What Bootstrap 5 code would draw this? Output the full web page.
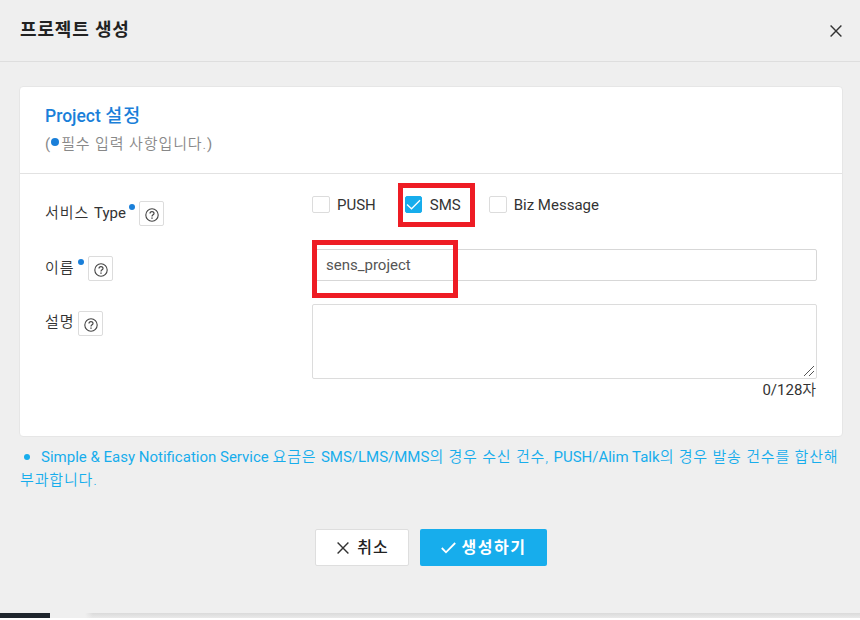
<!DOCTYPE html>
<html lang="ko">
<head>
<meta charset="utf-8">
<title>프로젝트 생성</title>
<link href="https://cdn.jsdelivr.net/npm/bootstrap@5.3.0/dist/css/bootstrap.min.css" rel="stylesheet">
<style>
body{font-family:Roboto,"Noto Sans CJK KR",sans-serif;font-size:15px;line-height:22px;color:#333;background:#fff;height:620px;overflow:hidden}
.dialog-page{height:618px;background:#efefef}
.dialog-head{height:62px;border-bottom:1px solid #dedede;padding:17px 18px 0 20px}
.dialog-title{font-size:18px;line-height:26px;font-weight:700;color:#222;margin:0;letter-spacing:.85px}
.close-x{margin-top:8px;width:12px;height:12px}
.ko{letter-spacing:.83px;font-weight:350}
.panel{margin:24px 17px 0 19px;height:351px;border:1px solid #e6e6e6;border-radius:4px}
.panel-top{height:87px;padding:16px 25px 0;border-bottom:1px solid #e2e2e2}
.panel-title{font-size:17.5px;line-height:26px;font-weight:500;color:#1a7fd9;margin:0}
.panel-title .ko{font-weight:500;letter-spacing:1px;font-size:18.5px}
.hint{color:#888;line-height:24px;margin-top:3px}
.hint .ko{letter-spacing:.9px}
.dot{display:inline-block;width:6px;height:6px;border-radius:50%;background:#1a7fd9}
.hint .dot{width:8px;height:8px;margin:0 2px 0 1px;vertical-align:3px}
.panel-body{padding:0 25px}
.label-col{width:267px;flex-shrink:0}
.label-col .dot{margin:2px 4px 0 3px}
.label-col .ko{letter-spacing:1px}
.help{width:25px;height:25px;border:1px solid #dcdcdc;border-radius:2px;background:#fff;margin-top:-1px;padding:2px 0 0 2px}
.row-type{height:75px;padding-top:20px}
.row-name{height:55px}
.row-desc{height:100px}
.row-desc .lbl{margin-top:-1px;margin-right:3px}
.check{width:18px;height:17px;border:1px solid #dcdcdc;border-radius:2px;background:#fff;margin-right:7px}
.check-on{background:#17adec;border-color:#17adec;width:17px;margin-right:8px}
.opt{margin-top:-1px}
.opt-text{margin-top:1px}
.opt-sms{margin-left:29px;margin-right:28px}
.field{width:505px;border:1px solid #d7d7d7;border-radius:2px;padding:4px 13px;color:#555;font-size:15px;line-height:22px;background:#fff;display:block;outline:0}
.field-line{height:32px}
.field-area{height:75px;resize:none;border-color:#dcdcdc}
.grip{position:absolute;right:2px;bottom:2px}
.mark-box{position:absolute;border:5px solid #ee1c24;pointer-events:none}
.mark-sms{left:-7px;top:-10px;width:77px;height:44px}
.mark-name{left:0;top:-9px;width:146px;height:58px}
.note{color:#17adec;margin:9px 20px 0;line-height:23px;white-space:nowrap}
.note .dot{background:#17adec;margin:0 11px 0 4px;vertical-align:2px}
.actions{margin-top:37px;gap:11px;padding-left:315px}
.act{height:37px;border-radius:2px;font-size:16px;line-height:22px;padding:0}
.act-cancel{width:94px;background:#fff;border:1px solid #dedede;color:#222;font-weight:500;letter-spacing:1px;padding-left:2px}
.act-create{width:127px;background:#17adec;color:#fff;font-weight:700;border:0;letter-spacing:1.5px}
.act-create svg{margin-right:6px}
.under{height:5px}
.under-dark{width:50px;background:#1f252d}
.under-shade{margin-left:35px;background:linear-gradient(90deg,#efefef,rgba(239,239,239,0) 8px),linear-gradient(#dadada,#e9e9e9)}
</style>
<script src="https://cdn.jsdelivr.net/npm/bootstrap@5.3.0/dist/js/bootstrap.bundle.min.js"></script>
</head>
<body>
<svg class="d-none">
  <symbol id="q" viewBox="0 0 14 14"><circle cx="7" cy="7" r="6.2" fill="none" stroke="#444" stroke-width="1.1"/><path d="M5 5.6C5 3 9 3 9 5.4 9 6.8 7 6.8 7 8.4" fill="none" stroke="#444" stroke-width="1.2"/><path d="M6.3 9.5h1.4v1.3H6.3z" fill="#444"/></symbol>
  <symbol id="x" viewBox="0 0 12 12"><path d="M.6.6l10.8 10.8M11.4.6L.6 11.4" fill="none" stroke="#333" stroke-width="1.4"/></symbol>
</svg>
<div class="dialog-page d-flex flex-column">
  <header class="dialog-head d-flex justify-content-between align-items-start">
    <h1 class="dialog-title">프로젝트 생성</h1>
    <svg class="close-x"><use href="#x"/></svg>
  </header>
  <main>
    <section class="panel bg-white">
      <div class="panel-top">
        <h2 class="panel-title">Project <span class="ko">설정</span></h2>
        <div class="hint">(<i class="dot"></i><span class="ko">필수 입력 사항입니다.</span>)</div>
      </div>
      <div class="panel-body">
        <div class="row-type d-flex">
          <div class="label-col d-flex align-items-start pt-2"><span class="lbl"><span class="ko">서비스 </span>Type</span><i class="dot"></i><span class="help d-flex align-items-center justify-content-center"><svg width="14" height="14"><use href="#q"/></svg></span></div>
          <div class="d-flex align-items-start">
            <label class="opt d-flex align-items-center"><span class="check"></span><span class="opt-text">PUSH</span></label>
            <label class="opt opt-sms d-flex align-items-center position-relative"><span class="check check-on d-flex"><svg width="15" height="15" viewBox="0 0 15 15"><path d="M1 7.6l4.5 4.2L14 3.2" fill="none" stroke="#fff" stroke-width="1.3"/></svg></span><span class="opt-text">SMS</span><span class="mark-box mark-sms"></span></label>
            <label class="opt d-flex align-items-center"><span class="check"></span><span class="opt-text">Biz Message</span></label>
          </div>
        </div>
        <div class="row-name d-flex">
          <div class="label-col d-flex align-items-start pt-2"><span class="lbl"><span class="ko">이름</span></span><i class="dot"></i><span class="help d-flex align-items-center justify-content-center"><svg width="14" height="14"><use href="#q"/></svg></span></div>
          <div class="position-relative"><input class="field field-line" value="sens_project"><span class="mark-box mark-name"></span></div>
        </div>
        <div class="row-desc d-flex">
          <div class="label-col d-flex align-items-start pt-2"><span class="lbl"><span class="ko">설명</span></span><span class="help d-flex align-items-center justify-content-center"><svg width="14" height="14"><use href="#q"/></svg></span></div>
          <div>
            <div class="position-relative"><textarea class="field field-area"></textarea><svg class="grip" width="12" height="12" viewBox="0 0 12 12"><path d="M1 11L11 1M6 11l5-5" stroke="#555" fill="none"/></svg></div>
            <div class="text-end">0/128<span class="ko">자</span></div>
          </div>
        </div>
      </div>
    </section>
    <div class="note"><i class="dot"></i>Simple &amp; Easy Notification Service <span class="ko">요금은 </span>SMS/LMS/MMS<span class="ko">의 경우 수신 건수, </span>PUSH/Alim Talk<span class="ko">의 경우 발송 건수를 합산해<br>부과합니다.</span></div>
    <div class="actions d-flex">
      <button class="btn act act-cancel d-flex align-items-center justify-content-center"><svg class="me-2" width="12" height="12"><use href="#x"/></svg>취소</button>
      <button class="btn act act-create d-flex align-items-center justify-content-center"><svg width="15" height="12" viewBox="0 0 15 12"><path d="M.8 6l4.2 4.3L14.2 1" fill="none" stroke="#fff" stroke-width="1.8"/></svg>생성하기</button>
    </div>
  </main>
  <div class="under d-flex mt-auto"><div class="under-dark"></div><div class="under-shade flex-grow-1"></div></div>
</div>
</body>
</html>
